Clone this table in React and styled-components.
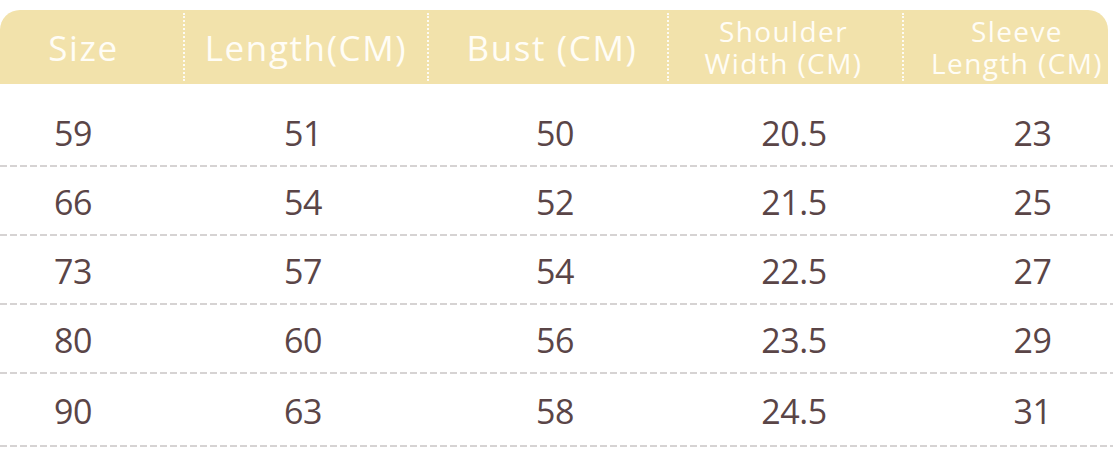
import React from 'react';
import styled, { createGlobalStyle } from 'styled-components';

const COLORS = {
  header: '#f2e2ab',
  headerText: '#fffdf6',
  text: '#5a4547',
  dash: '#d6d3d3',
};

const FONT_FAMILY = '"Open Sans", "Noto Sans", sans-serif';

const GlobalStyle = createGlobalStyle`
  html, body {
    margin: 0;
    padding: 0;
    background: #ffffff;
  }
`;

const Table = styled.div`
  width: 1113px;
  padding-top: 10px;
  font-family: ${FONT_FAMILY};
  overflow: hidden;
`;

const HeaderRow = styled.div`
  display: grid;
  grid-template-columns: 183px 244px 240px 235px 1fr;
  width: 1108px;
  height: 74px;
  background: ${COLORS.header};
  border-radius: 20px 20px 0 0;
`;

const HeaderCell = styled.div`
  display: flex;
  flex-direction: column;
  align-items: center;
  justify-content: center;
  text-align: center;
  color: ${COLORS.headerText};
  font-size: 35px;
  letter-spacing: 1.6px;
  white-space: nowrap;
  padding-left: ${(p) => Math.max(p.$shift || 0, 0)}px;
  padding-right: ${(p) => Math.max(-(p.$shift || 0), 0)}px;
  margin: 3px 0;
  & + & {
    border-left: 2px dotted rgba(255, 255, 255, 0.85);
  }
`;

const HeaderLine = styled.div`
  font-size: 28px;
  line-height: 32px;
  letter-spacing: 1.4px;
`;

const Body = styled.div`
  padding-top: 14px;
`;

const Row = styled.div`
  position: relative;
  display: grid;
  grid-template-columns: 146px 314px 190px 288px 175px;
  height: ${(p) => (p.$last ? 73 : 69)}px;
  &::after {
    content: '';
    position: absolute;
    left: 0;
    right: 0;
    bottom: 0;
    height: 2px;
    background: repeating-linear-gradient(
      90deg,
      ${COLORS.dash} 0 7px,
      transparent 7px 10px
    );
  }
`;

const Cell = styled.div`
  display: flex;
  align-items: center;
  justify-content: center;
  padding-left: ${(p) => p.$nudge || 0}px;
  color: ${COLORS.text};
  font-size: 34px;
  letter-spacing: -0.5px;
`;

const headers = [
  { label: ['Size'], shift: -16 },
  { label: ['Length(CM)'] },
  { label: ['Bust (CM)'], shift: 8 },
  { label: ['Shoulder', 'Width (CM)'], shift: -4 },
  { label: ['Sleeve', 'Length (CM)'], shift: 22 },
];

const rows = [
  ['59', '51', '50', '20.5', '23'],
  ['66', '54', '52', '21.5', '25'],
  ['73', '57', '54', '22.5', '27'],
  ['80', '60', '56', '23.5', '29'],
  ['90', '63', '58', '24.5', '31'],
];

export default function App() {
  return (
    <>
      <GlobalStyle />
      <Table>
        <HeaderRow>
          {headers.map((h, i) => (
            <HeaderCell key={i} $shift={h.shift}>
              {h.label.length > 1
                ? h.label.map((line) => <HeaderLine key={line}>{line}</HeaderLine>)
                : h.label[0]}
            </HeaderCell>
          ))}
        </HeaderRow>
        <Body>
          {rows.map((r, i) => (
            <Row key={i} $last={i === rows.length - 1}>
              {r.map((v, j) => (
                <Cell key={j} $nudge={j === 4 ? 14 : 0}>
                  {v}
                </Cell>
              ))}
            </Row>
          ))}
        </Body>
      </Table>
    </>
  );
}
